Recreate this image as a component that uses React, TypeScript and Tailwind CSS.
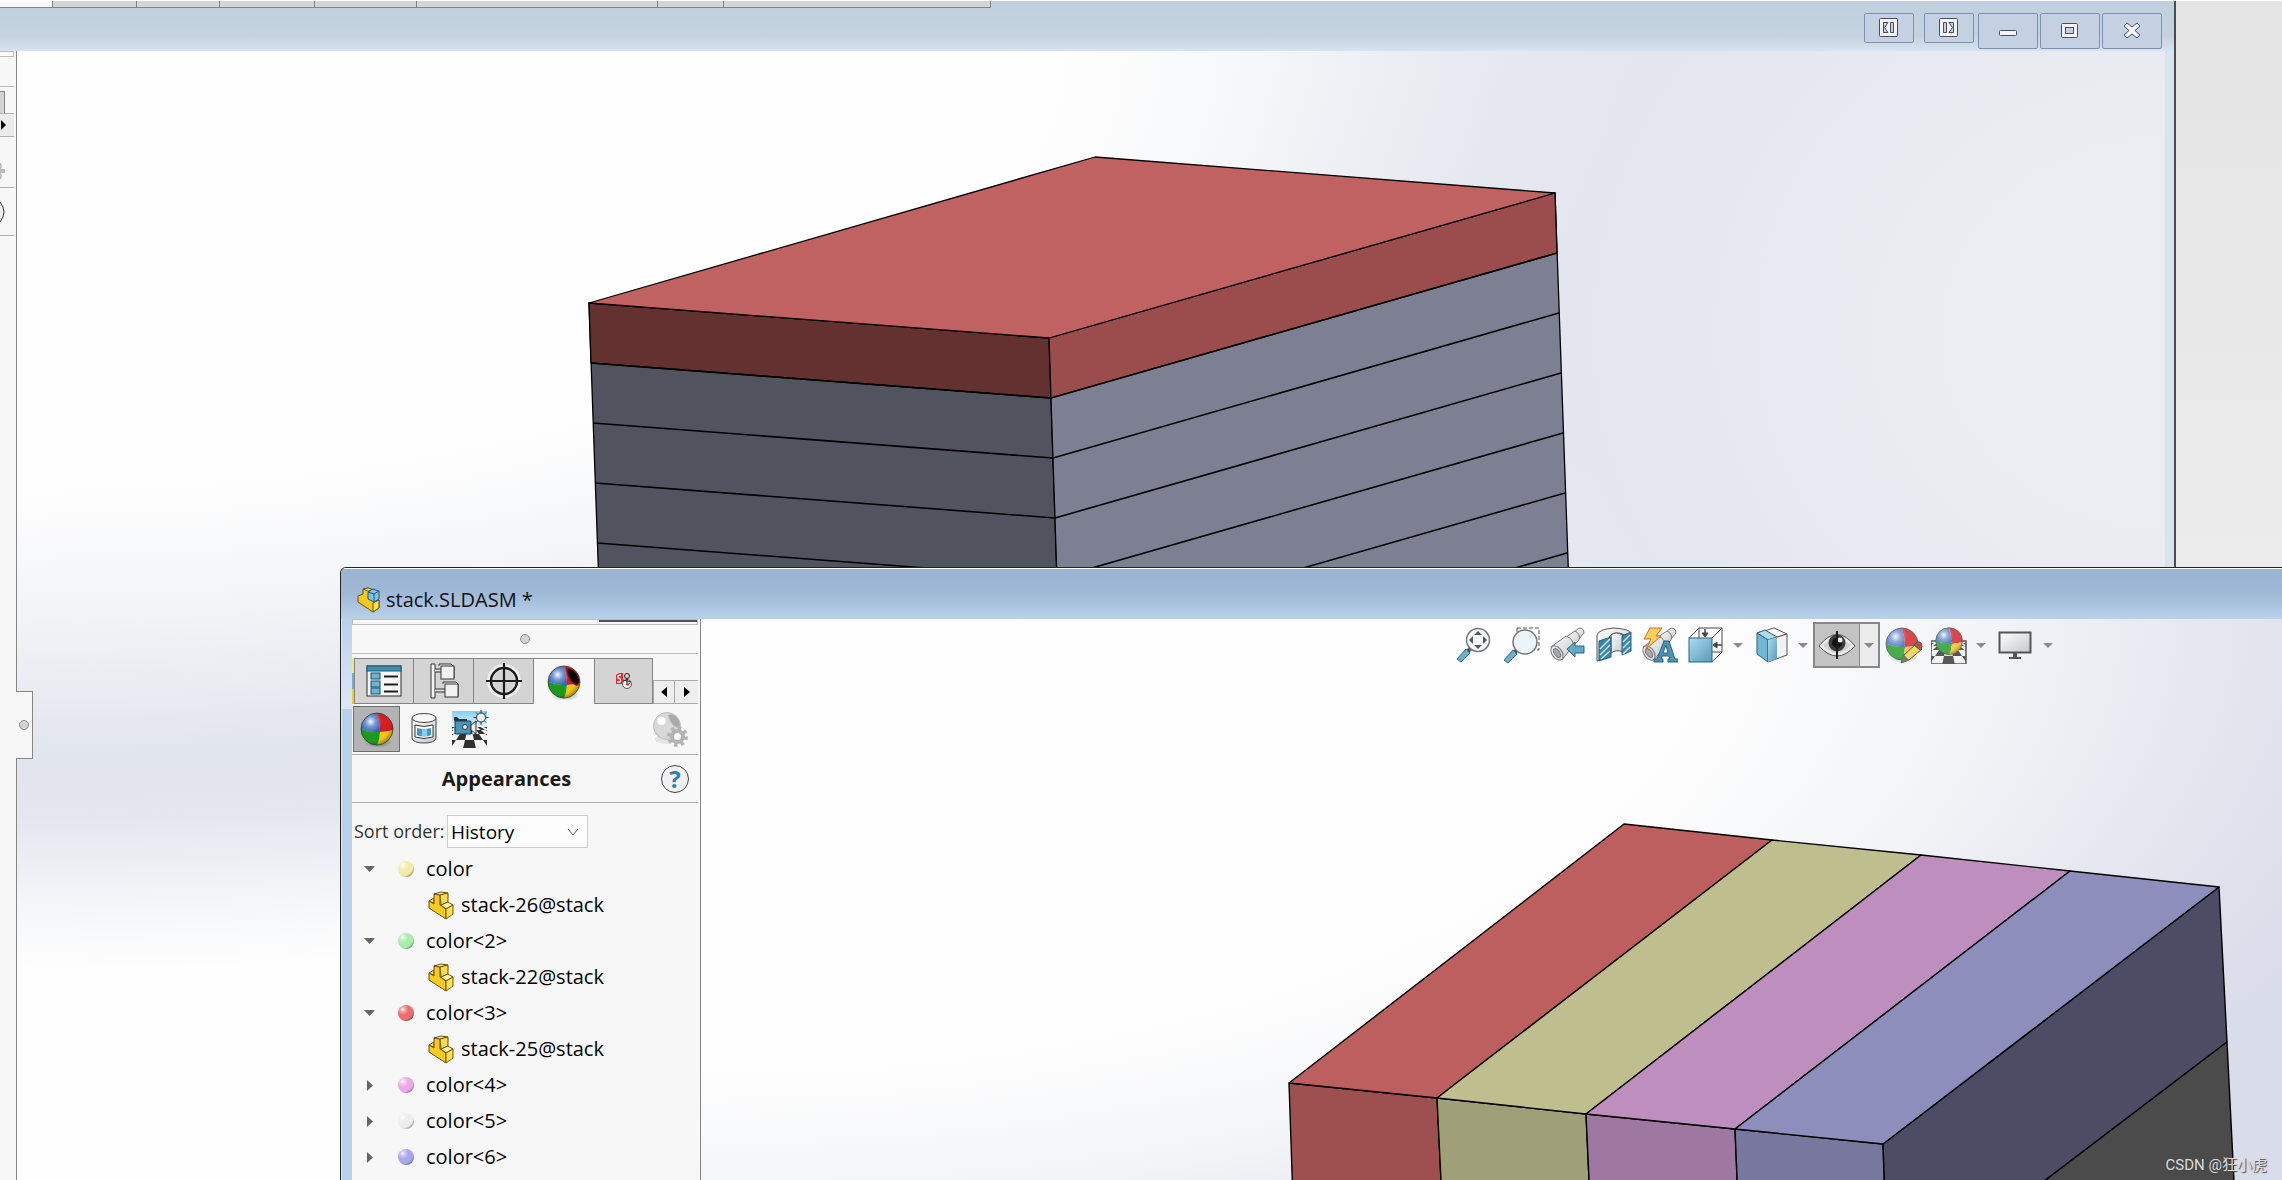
import React from "react";

type IconProps = { className?: string };

function SharedDefs() {
  return (
    <svg className="absolute h-0 w-0" aria-hidden="true">
      <defs>
        <radialGradient id="shine" cx="0.3" cy="0.27" r="0.8">
          <stop offset="0" stopColor="#fff" stopOpacity="0.95" />
          <stop offset="0.2" stopColor="#fff" stopOpacity="0.35" />
          <stop offset="0.45" stopColor="#fff" stopOpacity="0" />
          <stop offset="0.8" stopColor="#000" stopOpacity="0" />
          <stop offset="1" stopColor="#000" stopOpacity="0.35" />
        </radialGradient>
        <radialGradient id="shadow">
          <stop offset="0" stopColor="#000" stopOpacity="0.45" />
          <stop offset="1" stopColor="#000" stopOpacity="0" />
        </radialGradient>
        <linearGradient id="metal" x1="0" x2="1" y1="0" y2="1">
          <stop offset="0" stopColor="#fff" />
          <stop offset="1" stopColor="#c4c6c8" />
        </linearGradient>
        <linearGradient id="steel" x1="0" x2="1" y1="0" y2="1">
          <stop offset="0" stopColor="#a9dcf0" />
          <stop offset="1" stopColor="#5b9ab8" />
        </linearGradient>
        <linearGradient id="sky" x1="0" x2="0" y1="0" y2="1">
          <stop offset="0" stopColor="#7fd0f5" />
          <stop offset="1" stopColor="#fff" />
        </linearGradient>
        <clipPath id="ballClip">
          <circle cx="18" cy="18" r="16" />
        </clipPath>
        <clipPath id="floorClip">
          <rect y="16" width="35" height="22" />
        </clipPath>
      </defs>
    </svg>
  );
}

function BallShape() {
  return (
    <>
      <ellipse cx="19" cy="31" rx="14" ry="6" fill="url(#shadow)" />
      <g clipPath="url(#ballClip)">
        <path d="M0 0H17Q21 10 21 22Q10 21 0 17Z" fill="#2f62bd" />
        <path d="M17 0H36V18Q30 21 21 21Q21 10 17 0Z" fill="#d31d23" />
        <path d="M0 17Q10 21 21 21Q21 29 17 36H0Z" fill="#1c9a20" />
        <path d="M21 21Q30 21 36 18V36H17Q21 29 21 21Z" fill="#f0c419" />
        <circle cx="18" cy="18" r="16" fill="url(#shine)" />
      </g>
      <circle cx="18" cy="18" r="16" fill="none" stroke="#333" strokeOpacity="0.75" />
    </>
  );
}

function BallIcon({ className = "size-9" }: IconProps) {
  return (
    <svg viewBox="0 0 36 36" className={className}>
      <BallShape />
    </svg>
  );
}

function DisplayManagerIcon() {
  return (
    <svg viewBox="0 0 36 36" className="size-9">
      <BallShape />
      <path d="M20 4Q28 3 32 12Q35 20 31 22Q25 20 22 13Q20 8 20 4Z" fill="#8e1317" />
      <path d="M22 5Q28 5 32 13Q34 19 31 20Q26 19 23 12Q21 8 22 5Z" fill="#080808" />
    </svg>
  );
}

function PropertyIcon() {
  return (
    <svg viewBox="0 0 36 36" className="size-9" fill="none">
      <rect x="1" y="3" width="34" height="30" fill="#f7f7f7" stroke="#2c2c2c" />
      <rect x="1" y="3" width="34" height="5" fill="#3f8fb3" stroke="#1d5877" />
      {[10, 18, 25].map((y) => (
        <g key={y}>
          <rect x="5" y={y} width="9" height="6" fill="#6fb4d3" stroke="#174d69" />
          <path d={`M18 ${y + 3.5}H32`} stroke="#1c1c1c" strokeWidth="2" />
        </g>
      ))}
    </svg>
  );
}

function ConfigIcon() {
  return (
    <svg viewBox="0 0 36 36" className="size-9" fill="#f2f2f2" stroke="#333">
      <path d="M5 1H9V35H5Z" />
      <path d="M9 6H16V9H9M9 26H20V29H9" fill="#ddd" />
      <path d="M13 3V1H25L28 4V15H25" />
      <rect x="15" y="3" width="13" height="13" />
      <path d="M17 21V19H30L32 21V33" />
      <rect x="19" y="21" width="13" height="13" />
    </svg>
  );
}

function DimExpertIcon() {
  return (
    <svg viewBox="0 0 36 36" className="size-9" fill="none">
      <circle cx="18" cy="18" r="14" stroke="#fff" strokeOpacity="0.6" strokeWidth="6" />
      <circle cx="18" cy="18" r="13" stroke="#1d1d1d" strokeWidth="2.5" />
      <path d="M18 0V36M0 18H36" stroke="#1d1d1d" strokeWidth="2.2" />
    </svg>
  );
}

function AddInIcon() {
  return (
    <svg viewBox="0 0 18 18" className="size-[18px]" fill="none">
      <path d="M1 3L4 1H8V12H1Z" fill="#e8262c" />
      <path d="M6 3Q2 3 3 6Q7 7 5 10H2" stroke="#fff" strokeWidth="1.3" />
      <circle cx="12" cy="4" r="2.5" stroke="#222" />
      <circle cx="12" cy="12" r="4.5" fill="#f5f5f5" stroke="#555" />
      <path d="M12 6V13L15 11M8 8L16 10" stroke="#222" />
      <path d="M11 12L14 13" stroke="#e8262c" strokeWidth="1.5" />
    </svg>
  );
}

function DecalIcon() {
  return (
    <svg viewBox="0 0 28 34" className="h-[34px] w-7">
      <path d="M2 6V26Q3 31 14 31T26 26V6" fill="url(#metal)" stroke="#444" />
      <ellipse cx="14" cy="6" rx="12" ry="4.5" fill="#f8f8f8" stroke="#444" />
      <path d="M5 13Q14 16 23 13V25Q14 28 5 25Z" fill="#fff" stroke="#333" />
      <path d="M7 16Q14 18 21 16V23Q14 26 7 23Z" fill="#4a97bd" />
      <path d="M12 17.200H17V24H12Z" fill="#8cd0f0" />
    </svg>
  );
}

// Checkered floor fanning out from a vanishing point at (17.5, 10)
const floorRows = [17, 20, 24, 30, 38];

function Checker() {
  const at = (col: number, y: number) => 17.5 + (col - 0.5) * 0.45 * (y - 10);
  return (
    <g clipPath="url(#floorClip)">
      <path d="M0 17H36V38H0Z" fill="#303030" />
      {floorRows.slice(0, -1).map((top, row) => {
        const bottom = floorRows[row + 1];
        return [-6, -4, -2, 0, 2, 4, 6].map((n) => {
          const col = n + (row % 2);
          return (
            <path
              key={`${row}-${n}`}
              d={`M${at(col, top)} ${top}H${at(col + 1, top)}L${at(col + 1, bottom)} ${bottom}H${at(col, bottom)}Z`}
              fill="#f2f2f2"
            />
          );
        });
      })}
    </g>
  );
}

function SceneCameraIcon() {
  return (
    <svg viewBox="0 0 37 38" className="h-[38px] w-[37px]">
      <rect y="1" width="35" height="20" fill="url(#sky)" />
      <Checker />
      <path d="M2 10V7H5L7 9H15V12H3Z" fill="#333" />
      <rect x="3" y="11" width="16" height="13" rx="1" fill="#4a93b8" stroke="#173f56" />
      <path d="M19 15L24 11V24L19 20Z" fill="#eee" stroke="#333" />
      <circle cx="13" cy="17" r="2.5" fill="#dfe8ec" stroke="#333" />
      <g stroke="#333" fill="#e9eef0">
        <path d="M29 0V15M21.500 7.500H36.500M24 2.500L34 12.500M34 2.500L24 12.500" />
        <circle cx="29" cy="7.500" r="4.500" />
      </g>
    </svg>
  );
}

function RenderOptionsIcon() {
  return (
    <svg viewBox="0 0 36 36" className="size-9">
      <ellipse cx="15" cy="28" rx="12" ry="5" fill="#e3e3e3" />
      <circle cx="15" cy="15" r="13.500" fill="#d8d8d8" stroke="#bbb" />
      <path d="M16 4Q23 2 27 10Q29 16 26 17Q19 15 16 4Z" fill="#aaa" />
      <circle cx="9.500" cy="10" r="4" fill="#fff" />
      <circle cx="25.500" cy="25.500" r="5" fill="#f7f7f7" />
      <circle cx="25.500" cy="25.500" r="8.500" fill="none" stroke="#b3b3b3" strokeWidth="4" strokeDasharray="3.300 3.370" />
      <circle cx="25.500" cy="25.500" r="5.500" fill="none" stroke="#b3b3b3" strokeWidth="4" />
    </svg>
  );
}

function PartIcon() {
  return (
    <svg viewBox="0 0 27 29" className="h-[29px] w-[27px]" stroke="#6d5108" strokeLinejoin="round">
      <path d="M1 10L6 7V12Z" fill="#fbe98f" />
      <path d="M6 3L12 4V14L18 18V28L1 17V10L6 13Z" fill="#f7cb22" />
      <path d="M6 3L13 1L20 2L12 4Z" fill="#fdf0a0" />
      <path d="M12 4L20 2V11L13 14Z" fill="#f9dc52" />
      <path d="M13 14L20 11L25 14L18 18Z" fill="#fdf0a0" />
      <path d="M18 18L25 14V23L18 28Z" fill="#fbe153" />
    </svg>
  );
}

function AssemblyIcon() {
  return (
    <svg viewBox="0 0 24 26" className="h-[26px] w-6" stroke="#6d5108" strokeLinejoin="round">
      <path d="M1 9L6 7V2L11 1L17 3V14L22 13V21L16 25L1 15Z" fill="#f6c91f" />
      <path d="M6 2L11 1L16 3L11 4Z" fill="#fdf0a0" />
      <path d="M16 16L22 13V21L16 25Z" fill="#fbe153" />
      <path d="M11 5L16 2L22 4V12L17 15L11 12Z" fill="#7dc3e2" stroke="#1d5877" />
      <path d="M11 5L17 7L22 4M17 7V15" fill="none" stroke="#1d5877" />
    </svg>
  );
}

function ZoomFitIcon() {
  return (
    <svg viewBox="0 0 36 36" className="size-9">
      <path d="M10 22L14 26L5 35L1 32Z" fill="#6cb0cf" stroke="#38687e" />
      <path d="M12 24L15 21" stroke="#555" strokeWidth="4" />
      <circle cx="22" cy="13" r="11.500" fill="#f4f9fb" stroke="#777" strokeWidth="1.500" />
      <path d="M22 4L26 8H18ZM22 22L18 18H26ZM13 13L17 9V17ZM31 13L27 9V17Z" fill="#555" />
    </svg>
  );
}

function ZoomAreaIcon() {
  return (
    <svg viewBox="0 0 38 38" className="size-[38px]">
      <path d="M15 2H37V24H15Z" fill="none" stroke="#555" strokeDasharray="4 2" />
      <path d="M11 24L15 28L6 37L2 34Z" fill="#6cb0cf" stroke="#38687e" />
      <path d="M13 26L16 23" stroke="#555" strokeWidth="4" />
      <circle cx="23" cy="16" r="12" fill="#eaf5fa" stroke="#777" strokeWidth="1.500" />
    </svg>
  );
}

function Spyglass() {
  return (
    <g fill="url(#metal)" stroke="#777">
      <path d="M24 5L29 1Q34 1 34 6L29 12Z" />
      <path d="M16 10L25 4Q31 7 29 13L22 20Z" />
      <path d="M1 20L16 9Q24 12 23 19L12 33Z" />
      <ellipse cx="7" cy="26" rx="5" ry="8" transform="rotate(-35 7 26)" />
      <ellipse cx="7" cy="26" rx="2.500" ry="5" transform="rotate(-35 7 26)" fill="#aaa" />
    </g>
  );
}

function PreviousViewIcon() {
  return (
    <svg viewBox="0 0 36 36" className="size-9">
      <Spyglass />
      <path d="M17 22L25 15V19H34V26H25V30Z" fill="#64a9c9" stroke="#28637f" />
    </svg>
  );
}

function SectionIcon() {
  return (
    <svg viewBox="0 0 36 36" className="size-9" stroke="#555">
      <path d="M1 8Q3 2 18 1Q33 2 35 6L29 8Q18 3 13 10V30L1 34Z" fill="url(#metal)" />
      <path d="M15 8Q20 4 27 8V25Q20 22 15 26Z" fill="url(#metal)" />
      <path d="M3 14L15 10V30L3 34Z" fill="#3d86a8" stroke="#28637f" />
      <path d="M26 9L35 5V24L26 28Z" fill="#3d86a8" stroke="#28637f" />
      <path d="M4 22L14 12M4 28L14 18M5 32L14 24M27 15L34 8M27 21L34 14M27 27L34 20" stroke="#c9e6f2" strokeWidth="1.500" />
    </svg>
  );
}

function DynamicViewsIcon() {
  return (
    <svg viewBox="0 0 36 36" className="size-9">
      <Spyglass />
      <path d="M8 1H20L14 9H19L4 22L9 12H2Z" fill="#fbd35c" stroke="#c9662a" />
      <path d="M22 14H27L33 32H36V35H26V32H28L27 29H20L19 32H21V35H12V32H15ZM24 18L21 26H26Z" fill="#4f93b3" stroke="#28637f" fillRule="evenodd" />
    </svg>
  );
}

function OrientationIcon() {
  return (
    <svg viewBox="0 0 36 36" className="size-9" fill="none" stroke="#444">
      <path d="M1 11L11 1H34V25L24 35M24 11L34 1M11 1V11M24 25H34" />
      <rect x="1" y="11" width="23" height="24" fill="url(#steel)" stroke="#28637f" />
      <path d="M17 2V9M34 18H27" strokeWidth="1.500" />
      <path d="M14 6H20L17 10ZM29 15V21L25 18Z" fill="#444" />
    </svg>
  );
}

function DisplayStyleIcon() {
  return (
    <svg viewBox="0 0 32 36" className="h-9 w-8" stroke="#555" strokeLinejoin="round">
      <path d="M1 6L18 1L31 7L12 13Z" fill="#f7f7f7" />
      <path d="M1 6L9 3L21 10L12 13Z" fill="#a8dcf2" />
      <path d="M1 6L12 13V35L1 27Z" fill="#74b6d5" stroke="#28637f" />
      <path d="M12 13L31 7V28L12 35Z" fill="#f1f1f1" />
      <path d="M12 13L21 10V32L12 35Z" fill="url(#steel)" stroke="none" />
    </svg>
  );
}

function EyeIcon() {
  return (
    <svg viewBox="0 0 38 28" className="h-7 w-[38px]">
      <path d="M1 15Q19 -8 37 15Q19 35 1 15Z" fill="#e9e9e9" stroke="#555" />
      <path d="M5 14Q19 4 33 14Q19 30 5 14Z" fill="#d2d2d2" />
      <circle cx="19" cy="12" r="8.500" fill="#3c3c3c" />
      <circle cx="19" cy="12" r="5" fill="#111" />
      <circle cx="22" cy="9" r="2.500" fill="#eee" />
      <path d="M19 0V28" stroke="#1a1a1a" strokeWidth="2" />
    </svg>
  );
}

function EditAppearanceIcon() {
  return (
    <svg viewBox="0 0 40 38" className="h-[38px] w-10">
      <g opacity="0.8">
        <BallShape />
      </g>
      <path d="M17 37L20 29L32 18L38 23L25 34Z" fill="#f3d66a" stroke="#555" />
      <path d="M17 37L20 29L25 34Z" fill="#777" />
      <path d="M30 19L33 16Q38 15 38 21L36 24Z" fill="#c9484c" stroke="#555" />
    </svg>
  );
}

function ApplySceneIcon() {
  return (
    <svg viewBox="0 0 36 38" className="h-[38px] w-9">
      <g opacity="0.8">
        <Checker />
        <path d="M0 15H35V38H0Z" fill="none" stroke="#303030" strokeWidth="1.500" />
        <g transform="translate(3 0) scale(0.84)">
          <BallShape />
        </g>
      </g>
    </svg>
  );
}

function MonitorIcon() {
  return (
    <svg viewBox="0 0 34 30" className="h-[30px] w-[34px]">
      <rect x="1.500" y="2.500" width="31" height="20" fill="url(#metal)" stroke="#555" strokeWidth="2" />
      <path d="M15 23H19V27H23V29H11V27H15Z" fill="#555" />
    </svg>
  );
}

function Caret({ label }: { label: string }) {
  return (
    <button type="button" aria-label={label} className="flex w-3 items-center justify-center">
      <svg viewBox="0 0 10 5" className="h-[5px] w-[10px]" fill="#8b8b8b">
        <path d="M0 0H10L5 5Z" />
      </svg>
    </button>
  );
}

function IconButton({
  label,
  className = "w-[47px]",
  children,
}: {
  label: string;
  className?: string;
  children: React.ReactNode;
}) {
  return (
    <button type="button" aria-label={label} className={`flex h-full shrink-0 items-center justify-center ${className}`}>
      {children}
    </button>
  );
}

function ViewToolbar() {
  return (
    <div className="relative flex h-[46px] items-center justify-end pr-[224px]">
      <IconButton label="Zoom to fit">
        <ZoomFitIcon />
      </IconButton>
      <IconButton label="Zoom to area">
        <ZoomAreaIcon />
      </IconButton>
      <IconButton label="Previous view">
        <PreviousViewIcon />
      </IconButton>
      <IconButton label="Section view" className="w-[45px]">
        <SectionIcon />
      </IconButton>
      <IconButton label="Dynamic annotation views">
        <DynamicViewsIcon />
      </IconButton>
      <IconButton label="View orientation" className="w-[45px]">
        <OrientationIcon />
      </IconButton>
      <div className="flex pr-2 pl-1">
        <Caret label="View orientation options" />
      </div>
      <IconButton label="Display style" className="w-10">
        <DisplayStyleIcon />
      </IconButton>
      <div className="flex pr-1 pl-[5px]">
        <Caret label="Display style options" />
      </div>
      <div className="flex h-full border-2 border-[#888] bg-[#c3c3c4]">
        <IconButton label="Hide/show items" className="w-[44px]">
          <EyeIcon />
        </IconButton>
        <div className="flex border-l border-[#888] bg-[#ececec] px-[3px]">
          <Caret label="Hide/show options" />
        </div>
      </div>
      <IconButton label="Edit appearance">
        <EditAppearanceIcon />
      </IconButton>
      <IconButton label="Apply scene" className="w-[44px]">
        <ApplySceneIcon />
      </IconButton>
      <div className="flex px-1">
        <Caret label="Apply scene options" />
      </div>
      <IconButton label="View settings">
        <MonitorIcon />
      </IconButton>
      <div className="flex px-1">
        <Caret label="View settings options" />
      </div>
    </div>
  );
}

// Slab stack of the rear window; every layer is 60px below the previous one
function GreyStack() {
  const layers = [1, 2, 3, 4, 5, 6];
  return (
    <svg className="absolute inset-0 h-full w-full" stroke="#000" strokeWidth="1.300" strokeLinejoin="round">
      <g transform="translate(-16 -50)">
        <path d="M588 302L1048 337L1060 700L602 700Z" fill="#51535f" />
        <path d="M1048 337L1554 192L1572 700H1060Z" fill="#7d8092" />
        <path d="M588 302L1048 337L1050 397L590 362Z" fill="#643131" />
        <path d="M1048 337L1554 192L1556 252L1050 397Z" fill="#9b4d4d" />
        <path d="M588 302L1094 156L1554 192L1048 337Z" fill="#c16262" />
        {layers.map((n) => (
          <path
            key={n}
            d={`M${588 + n * 2} ${302 + n * 60}L${1048 + n * 2} ${337 + n * 60}L${1554 + n * 2} ${192 + n * 60}`}
            fill="none"
            strokeWidth="1.600"
          />
        ))}
      </g>
    </svg>
  );
}

function ColorStack() {
  return (
    <svg className="absolute inset-0 h-full w-full" stroke="#000" strokeWidth="1.400" strokeLinejoin="round">
      <g transform="translate(-701 -618)">
        <path d="M1289 1082L1437 1097L1442 1200H1293Z" fill="#9e5050" />
        <path d="M1437 1097L1586 1113L1590 1200H1442Z" fill="#9fa078" />
        <path d="M1586 1113L1735 1128L1738 1200H1590Z" fill="#9e78a0" />
        <path d="M1735 1128L1883 1143L1885 1200H1738Z" fill="#78789e" />
        <path d="M1883 1143L2219 886L2227 1041L2018 1200H1885Z" fill="#4c4c64" />
        <path d="M2227 1041L2235 1200H2018Z" fill="#4b4b4b" />
        <path d="M1289 1082L1624 823L1772 839L1437 1097Z" fill="#bd5f5f" />
        <path d="M1437 1097L1772 839L1921 854L1586 1113Z" fill="#bebe8e" />
        <path d="M1586 1113L1921 854L2070 870L1735 1128Z" fill="#be8ebe" />
        <path d="M1735 1128L2070 870L2219 886L1883 1143Z" fill="#8e8ebd" />
      </g>
    </svg>
  );
}

const ribbonTabs = ["w-[53px] bg-[#f7f7f7]", "w-[84px]", "w-[83px]", "w-[95px]", "w-[102px]", "w-[241px]", "w-[66px]", "w-[267px]"];

function RearWindow() {
  return (
    <section className="flex h-full flex-1 flex-col border-r-2 border-[#4c4c4c] bg-[#d6e4f1]">
      <div className="flex h-[50px] shrink-0 items-start justify-between bg-linear-to-b from-[#bfcfdd] via-[#c5d3e1] via-70% to-[#d6e4f2]">
        <div className="flex h-[7px] border-b border-[#838685] bg-[#d3d5d3]">
          {ribbonTabs.map((tab) => (
            <div key={tab} className={`${tab} border-r border-[#838685]`} />
          ))}
        </div>
        <div className="flex items-start gap-[2px] pt-3 pr-3">
          <button type="button" aria-label="Dock left" className="mr-2 flex h-[30px] w-[50px] items-center justify-center rounded-xs border border-[#8090b0] bg-[#c3d1e2]">
            <svg viewBox="0 0 20 20" className="size-5">
              <rect x="0.500" y="0.500" width="18" height="18" rx="1" fill="#f4f4f4" stroke="#4a4d60" />
              <path d="M4.500 4.500H9L5.500 9.500L9 14.500H4.500ZM11.500 4.500H14.500V14.500H11.500Z" fill="#c3d1e2" stroke="#4a4d60" />
            </svg>
          </button>
          <button type="button" aria-label="Dock right" className="mr-[2px] flex h-[30px] w-[50px] items-center justify-center rounded-xs border border-[#8090b0] bg-[#c3d1e2]">
            <svg viewBox="0 0 20 20" className="size-5">
              <rect x="0.500" y="0.500" width="18" height="18" rx="1" fill="#f4f4f4" stroke="#4a4d60" />
              <path d="M14.500 4.500H10L13.500 9.500L10 14.500H14.500ZM4.500 4.500H7.500V14.500H4.500Z" fill="#c3d1e2" stroke="#4a4d60" />
            </svg>
          </button>
          <button type="button" aria-label="Minimize" className="flex h-9 w-[60px] items-center justify-center rounded-xs border border-[#8090b0] bg-[#c3d1e2]">
            <svg viewBox="0 0 18 18" className="size-[18px]">
              <rect x="0.500" y="8.500" width="17" height="5" rx="1" fill="#f4f4f4" stroke="#4a4d60" />
            </svg>
          </button>
          <button type="button" aria-label="Maximize" className="flex h-9 w-[60px] items-center justify-center rounded-xs border border-[#8090b0] bg-[#c3d1e2]">
            <svg viewBox="0 0 18 18" className="size-[18px]">
              <rect x="0.500" y="1.500" width="16" height="14" rx="1" fill="#f4f4f4" stroke="#4a4d60" />
              <rect x="4.500" y="5.500" width="8" height="6" fill="#c3d1e2" stroke="#4a4d60" />
            </svg>
          </button>
          <button type="button" aria-label="Close" className="flex h-9 w-[60px] items-center justify-center rounded-xs border border-[#8090b0] bg-[#c3d1e2]">
            <svg viewBox="0 0 18 18" className="size-[18px]">
              <path d="M4 1L9 5L14 1L17 4L12 8.500L17 13L14 16L9 12L4 16L1 13L6 8.500L1 4Z" fill="#f4f4f4" stroke="#4a4d60" strokeLinejoin="round" />
            </svg>
          </button>
        </div>
      </div>
      <div className="flex min-h-0 flex-1 pr-[9px]">
        <div className="relative w-[17px] shrink-0 border-r border-[#858585] bg-[#f7f7f7]">
          <div className="flex w-[14px] flex-col">
            <div className="h-[6px] border-y border-r border-[#bdbdbd] bg-white" />
            <div className="h-[30px] border-b border-[#bdbdbd]" />
            <div className="h-[26px] pt-1">
              <div className="h-full w-[5px] border-t border-r border-[#858585] bg-[#d3d3d3]" />
            </div>
            <div className="flex h-6 items-center border-y border-[#b0b0b0] bg-[#ececec]">
              <svg viewBox="0 0 6 10" className="h-[10px] w-[6px]">
                <path d="M1 0L6 5L1 10Z" />
              </svg>
            </div>
            <div className="flex h-[51px] items-end border-b border-[#b0b0b0] pb-2">
              <svg viewBox="0 0 5 16" className="h-4 w-[5px]">
                <path d="M0 0H1L2 3L1 6H5V10H1L2 13L1 16H0Z" fill="#bbb" />
              </svg>
            </div>
            <div className="flex h-12 items-center border-b border-[#b0b0b0]">
              <svg viewBox="0 0 5 24" className="h-6 w-[5px]">
                <path d="M0 2Q8 12 0 22" fill="#eee" stroke="#333" />
              </svg>
            </div>
          </div>
          <div className="absolute top-[640px] left-4 z-10 flex h-[68px] w-[17px] items-center justify-center border border-l-0 border-[#858585] bg-[#f7f7f7]">
            <div className="size-[10px] rounded-full border border-[#8d8d8d] bg-[#d4d4d4]" />
          </div>
        </div>
        <div className="relative flex-1 bg-[radial-gradient(45%_75%_at_100%_25%,#ecedf2_20%,#e4e6ef_60%,#e4e6ef00_100%),radial-gradient(100%_80%_at_0%_0%,#fefefe_48%,#f3f4f7_62%,#e1e5ed_78%,#e3e5ef_84%,#f4f5f8_94%,#fefefe_102%)]">
          <GreyStack />
        </div>
      </div>
    </section>
  );
}

interface Appearance {
  name: string;
  dot: string;
  part?: string;
}

const appearances: Appearance[] = [
  { name: "color", dot: "#ededa8", part: "stack-26@stack" },
  { name: "color<2>", dot: "#a8eda8", part: "stack-22@stack" },
  { name: "color<3>", dot: "#f06e6e", part: "stack-25@stack" },
  { name: "color<4>", dot: "#eda8ed" },
  { name: "color<5>", dot: "#ededed" },
  { name: "color<6>", dot: "#a8a8ed" },
];

function AppearanceTree() {
  return (
    <ul className="pt-[3px] text-[20px] leading-9 text-black">
      {appearances.map((item) => (
        <li key={item.name}>
          <div className="flex h-9 items-center pl-3">
            <button type="button" aria-label={`Toggle ${item.name}`} className="flex w-[11px] justify-center">
              {item.part ? (
                <svg viewBox="0 0 11 6" className="h-[6px] w-[11px]" fill="#666">
                  <path d="M0 0H11L5.500 6Z" />
                </svg>
              ) : (
                <svg viewBox="0 0 6 11" className="h-[11px] w-[6px]" fill="#666">
                  <path d="M0 0L6 5.500L0 11Z" />
                </svg>
              )}
            </button>
            <svg viewBox="0 0 16 16" className="ml-[23px] size-4">
              <circle cx="8" cy="8" r="8" fill={item.dot} />
              <circle cx="8" cy="8" r="8" fill="url(#shine)" />
            </svg>
            <span className="ml-3">{item.name}</span>
          </div>
          {item.part && (
            <div className="flex h-9 items-center pl-[76px]">
              <PartIcon />
              <span className="ml-[6px]">{item.part}</span>
            </div>
          )}
        </li>
      ))}
    </ul>
  );
}

function ManagerPanel() {
  return (
    <aside className="w-[349px] shrink-0 border-r border-[#858585] bg-[#f7f7f7] pr-[2px]">
      <div className="flex h-[6px] justify-end border border-[#bdbdbd] bg-[#f7f7f7]">
        <div className="h-[2px] w-[98px] bg-[#51535f]" />
      </div>
      <div className="flex h-[29px] items-center justify-center border-b border-[#bdbdbd]">
        <div className="size-[10px] rounded-full border border-[#8d8d8d] bg-[#d4d4d4]" />
      </div>
      <div role="tablist" className="flex h-[50px] items-end">
        <div className="flex h-[46px] w-[2px] flex-col">
          <div className="flex-1 bg-[#f3e28a]" />
          <div className="flex-1 bg-[#6fb0cf]" />
          <div className="flex-1 bg-[#f6c91f]" />
        </div>
        <button type="button" role="tab" aria-label="PropertyManager" className="flex h-[46px] w-[60px] items-center justify-center border border-[#858585] bg-[#d4d4d4]">
          <PropertyIcon />
        </button>
        <button type="button" role="tab" aria-label="ConfigurationManager" className="flex h-[46px] w-[60px] items-center justify-center border-y border-r border-[#858585] bg-[#d4d4d4]">
          <ConfigIcon />
        </button>
        <button type="button" role="tab" aria-label="DimXpertManager" className="flex h-[46px] w-[60px] items-center justify-center border-y border-r border-[#858585] bg-[#d4d4d4]">
          <DimExpertIcon />
        </button>
        <button type="button" role="tab" aria-label="DisplayManager" className="flex h-[46px] w-[60px] items-center justify-center border-t border-[#858585]">
          <DisplayManagerIcon />
        </button>
        <button type="button" role="tab" aria-label="Add-in" className="flex h-[46px] w-[59px] items-center justify-center border border-[#858585] bg-[#d4d4d4]">
          <AddInIcon />
        </button>
        <button type="button" aria-label="Scroll tabs left" className="flex h-6 w-[22px] items-center justify-center border border-[#aaa] bg-[#eee]">
          <svg viewBox="0 0 6 10" className="h-[10px] w-[6px]">
            <path d="M6 0L0 5L6 10Z" />
          </svg>
        </button>
        <button type="button" aria-label="Scroll tabs right" className="flex h-6 w-[23px] items-center justify-center border-y border-[#aaa] bg-[#eee]">
          <svg viewBox="0 0 6 10" className="h-[10px] w-[6px]">
            <path d="M0 0L6 5L0 10Z" />
          </svg>
        </button>
      </div>
      <div className="flex h-[51px] items-center border-b border-[#b0b0b0] pl-px">
        <button type="button" aria-label="View appearances" className="flex h-[46px] w-[47px] items-center justify-center border border-[#6d6d6d] bg-[#b3b3b3]">
          <BallIcon />
        </button>
        <button type="button" aria-label="View decals" className="flex h-[46px] w-[47px] items-center justify-center">
          <DecalIcon />
        </button>
        <button type="button" aria-label="View scene, lights and cameras" className="flex h-[46px] w-[47px] items-center justify-center">
          <SceneCameraIcon />
        </button>
        <button type="button" aria-label="Render options" className="mr-[10px] ml-auto">
          <RenderOptionsIcon />
        </button>
      </div>
      <div className="flex h-12 items-center border-b border-[#b0b0b0] pr-[9px]">
        <h2 className="flex-1 text-center text-[20px] font-bold text-[#1a1a1a]">Appearances</h2>
        <button type="button" aria-label="Help" className="flex size-7 items-center justify-center rounded-full border border-[#444] bg-[#f0f0f0] text-[24px] leading-6 font-bold text-[#2f7fa8]">
          ?
        </button>
      </div>
      <div className="flex items-center pt-3 text-[#333]">
        <label htmlFor="sort-order" className="w-[95px] pl-[2px] text-[18px] whitespace-nowrap">
          Sort order:
        </label>
        <div className="relative">
          <select id="sort-order" className="h-[33px] w-[141px] appearance-none border border-[#ccc] bg-[#fdfdfd] pl-[3px] text-[19px] leading-[30px] text-black">
            <option>History</option>
          </select>
          <svg viewBox="0 0 12 7" className="pointer-events-none absolute top-[14px] right-[9px] h-[7px] w-3" fill="none" stroke="#555">
            <path d="M1 0L6 6L11 0" />
          </svg>
        </div>
      </div>
      <AppearanceTree />
    </aside>
  );
}

function FrontWindow() {
  return (
    <section className="absolute top-[566px] right-0 bottom-0 left-[340px] flex flex-col overflow-hidden rounded-tl-md border-t border-l border-[#222] bg-[#b9d1ea]">
      <header className="flex h-[51px] shrink-0 items-center border-t border-white bg-linear-to-b from-[#9ab4d2] via-[#9fb9d7] via-50% to-[#b9d1ea] pt-3 pl-4">
        <AssemblyIcon />
        <h1 className="ml-[5px] text-[20px] text-[#111]">stack.SLDASM *</h1>
      </header>
      <div className="flex min-h-0 flex-1">
        <div className="w-[11px] shrink-0 border-l border-white/50">
          <div className="h-[90px] bg-linear-to-b from-[#b9d1ea] to-[#dde8f6]" />
        </div>
        <ManagerPanel />
        <main className="relative flex-1 bg-[radial-gradient(110%_140%_at_0%_0%,#fefefe_57%,#f3f4f7_74%,#e4e7ef_87%,#d9dce9_102%)] pt-[3px]">
          <ColorStack />
          <ViewToolbar />
        </main>
      </div>
    </section>
  );
}

export default function App() {
  return (
    <div className="relative flex h-screen w-full overflow-hidden border-t border-white bg-linear-to-b from-[#e4e4e4] to-[#f4f4f4] font-['Open_Sans','Noto_Sans_CJK_SC',sans-serif]">
      <SharedDefs />
      <RearWindow />
      <div className="w-[106px] shrink-0" />
      <FrontWindow />
      <p className="absolute right-[15px] bottom-[5px] font-['Roboto','Noto_Sans_CJK_SC',sans-serif] text-[15px] leading-5 text-[#ddd] [text-shadow:1px_1px_1px_#444]">
        CSDN @狂小虎
      </p>
    </div>
  );
}
